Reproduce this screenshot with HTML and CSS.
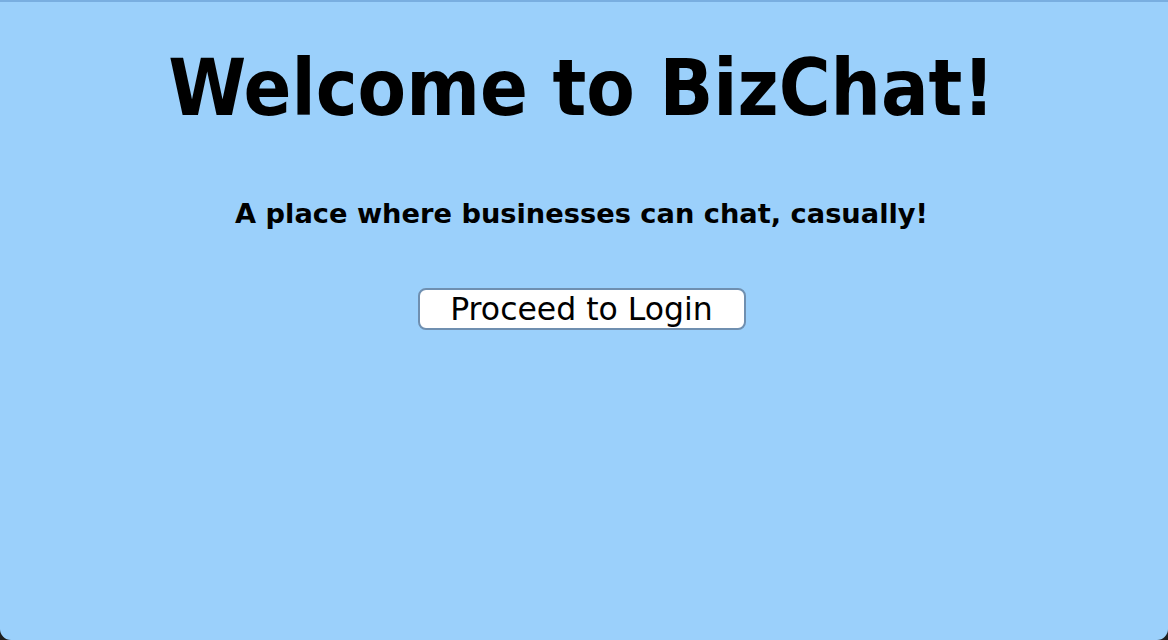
FILE: index.html
```html
<!DOCTYPE html>
<html>
<head>
<meta charset="utf-8">
<link rel="stylesheet" href="styles.css">
</head>
<body>
<div class="window">
  <h1 class="title">Welcome to BizChat!</h1>
  <p class="tagline">A place where businesses can chat, casually!</p>
  <button class="proceed">Proceed to Login</button>
</div>
</body>
</html>
```
FILE: styles.css
```css
html, body {
  margin: 0;
  padding: 0;
  background: #1e1e1e;
  height: 100%;
}
.window {
  box-sizing: border-box;
  height: 640px;
  padding-right: 5px;
  background: #9bd0fb;
  border-top: 2px solid #79aee0;
  border-radius: 0 0 11px 11px;
  display: flex;
  flex-direction: column;
  align-items: center;
  font-family: "DejaVu Sans", sans-serif;
  color: #000;
}
.title {
  margin: 36px 0 0;
  font-family: "DejaVu Sans Condensed", "DejaVu Sans", sans-serif;
  font-stretch: condensed;
  font-size: 78.6px;
  font-weight: bold;
  line-height: 100px;
  white-space: nowrap;
}
.tagline {
  margin: 60px 0 0;
  font-size: 27.25px;
  font-weight: bold;
  line-height: 32px;
  white-space: nowrap;
}
.proceed {
  margin-top: 58px;
  width: 328px;
  height: 42px;
  background: #fff;
  border: 2px solid #6f8fb0;
  border-radius: 8px;
  font-family: "DejaVu Sans", sans-serif;
  font-size: 31.5px;
  line-height: 38px;
  color: #000;
  padding: 0;
}
```
